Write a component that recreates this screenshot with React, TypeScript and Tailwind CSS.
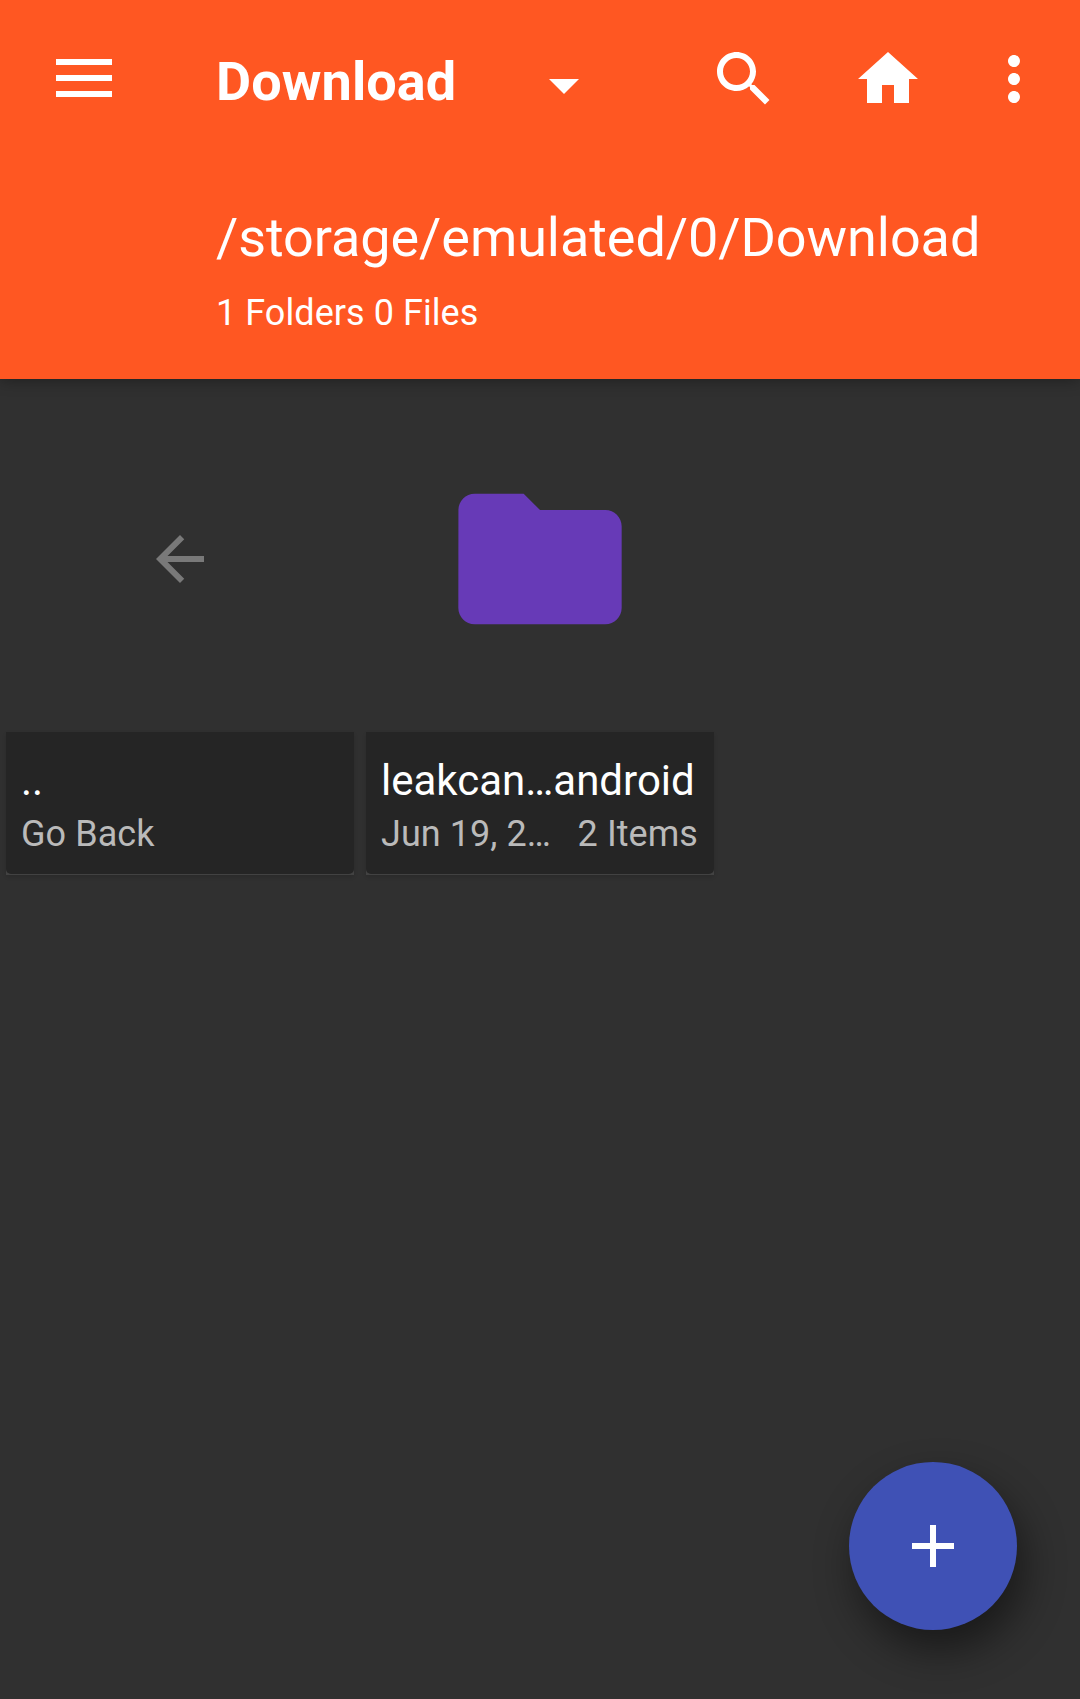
import type { ReactNode } from "react";

function Icon({ d, className = "" }: { d: string; className?: string }) {
  return (
    <svg viewBox="0 0 24 24" fill="currentColor" className={`block shrink-0 size-[72px] ${className}`}>
      <path d={d} />
    </svg>
  );
}

function Header() {
  return (
    <header className="relative h-[379px] w-full bg-[#ff5722] text-white shadow-[0_2px_14px_rgba(0,0,0,0.32)]">
      <div className="flex h-[158px] items-start">
        <button aria-label="Menu" className="ml-[56px] mt-[59px] flex w-[56px] flex-col gap-[10px]">
          <span className="h-[6px] w-full bg-white" />
          <span className="h-[6px] w-full bg-white" />
          <span className="h-[6px] w-full bg-white" />
        </button>
        <h1 className="ml-[104px] mt-[50px] w-[312px] whitespace-nowrap text-[54px] font-bold leading-[64px] tracking-[0.1px]">
          Download
        </h1>
        <Icon className="mt-[49px]" d="M7 10l5 5 5-5z" />
        <Icon
          className="ml-[108px] mt-[43px]"
          d="M15.5 14h-.79l-.28-.27C15.41 12.59 16 11.11 16 9.5 16 5.91 13.09 3 9.5 3S3 5.91 3 9.5 5.91 16 9.5 16c1.61 0 3.09-.59 4.23-1.57l.27.28v.79l5 4.99L20.49 19l-4.99-5zm-6 0C7.01 14 5 11.99 5 9.5S7.01 5 9.5 5 14 7.01 14 9.5 11.99 14 9.5 14z"
        />
        <Icon className="ml-[72px] mt-[43px]" d="M10 20v-6h4v6h5v-8h3L12 3 2 12h3v8z" />
        <Icon
          className="ml-[54px] mt-[43px]"
          d="M12 8c1.1 0 2-.9 2-2s-.9-2-2-2-2 .9-2 2 .9 2 2 2zm0 2c-1.1 0-2 .9-2 2s.9 2 2 2 2-.9 2-2-.9-2-2-2zm0 6c-1.1 0-2 .9-2 2s.9 2 2 2 2-.9 2-2-.9-2-2-2z"
        />
      </div>
      <div className="ml-[216px] pt-[48px]">
        <p className="whitespace-nowrap text-[54px] leading-[64px] tracking-[-0.07px]">/storage/emulated/0/Download</p>
        <p className="mt-[22px] whitespace-nowrap text-[36px] leading-[42px] tracking-[0.06px]">1 Folders 0 Files</p>
      </div>
    </header>
  );
}

function Tile({ icon, title, detail, extra }: { icon: ReactNode; title: string; detail: string; extra?: string }) {
  return (
    <article className="flex w-[348px] flex-col">
      <div className="flex h-[347px] items-center justify-center">{icon}</div>
      <div className="h-[143px] border-b border-[#424242] bg-[#424242] shadow-[0_2px_4px_rgba(0,0,0,0.12)]">
        <div className="h-full rounded-b-[5px] bg-[#252525] pt-6 pr-4 pl-[15px]">
          <h2 className="whitespace-nowrap text-[42px] leading-[50px] text-white">{title}</h2>
          <div className="mt-[7px] flex justify-between whitespace-nowrap text-[36px] leading-[42px] tracking-[0.06px] text-[#bababa]">
            <span>{detail}</span>
            {extra && <span>{extra}</span>}
          </div>
        </div>
      </div>
    </article>
  );
}

export default function App() {
  return (
    <div className="relative h-[1699px] w-[1080px] overflow-hidden bg-[#303030] font-['Roboto',sans-serif]">
      <Header />
      <main className="flex gap-3 px-1.5 pt-[6px]">
        <Tile
          icon={<Icon className="text-[#797979]" d="M20 11H7.83l5.59-5.59L12 4l-8 8 8 8 1.41-1.41L7.83 13H20v-2z" />}
          title=".."
          detail="Go Back"
        />
        <Tile
          icon={
            <svg viewBox="0 0 24 24" className="block size-[196px] text-[#673ab7]" fill="currentColor">
              <path d="M10 4H4c-1.1 0-1.99.9-1.99 2L2 18c0 1.1.9 2 2 2h16c1.1 0 2-.9 2-2V8c0-1.1-.9-2-2-2h-8l-2-2z" />
            </svg>
          }
          title="leakcan…android"
          detail="Jun 19, 2…"
          extra="2 Items"
        />
      </main>
      <button
        aria-label="Add"
        className="absolute right-[63px] bottom-[69px] flex size-[168px] items-center justify-center rounded-full bg-[#3f51b5] text-white shadow-[7px_20px_42px_rgba(0,0,0,0.48)]"
      >
        <Icon d="M19 13h-6v6h-2v-6H5v-2h6V5h2v6h6v2z" />
      </button>
    </div>
  );
}
